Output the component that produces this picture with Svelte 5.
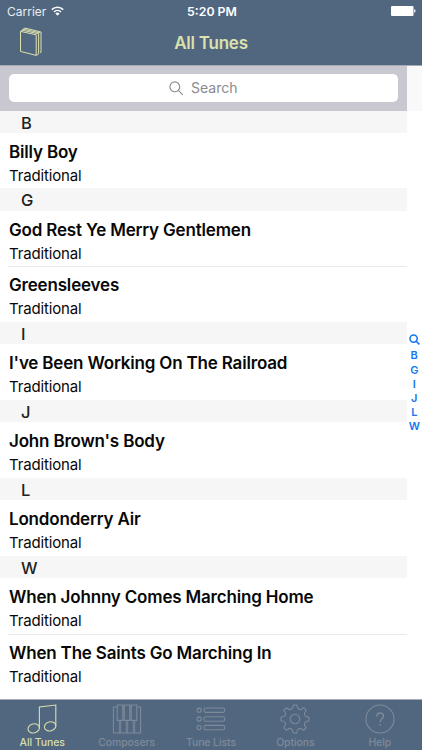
<script lang="ts">
  interface Tune {
    title: string;
    composer: string;
  }

  interface Section {
    letter: string;
    tunes: Tune[];
  }

  const composer = "Traditional";

  const sections: Section[] = [
    { letter: "B", tunes: [{ title: "Billy Boy", composer }] },
    {
      letter: "G",
      tunes: [
        { title: "God Rest Ye Merry Gentlemen", composer },
        { title: "Greensleeves", composer },
      ],
    },
    { letter: "I", tunes: [{ title: "I've Been Working On The Railroad", composer }] },
    { letter: "J", tunes: [{ title: "John Brown's Body", composer }] },
    { letter: "L", tunes: [{ title: "Londonderry Air", composer }] },
    {
      letter: "W",
      tunes: [
        { title: "When Johnny Comes Marching Home", composer },
        { title: "When The Saints Go Marching In", composer },
      ],
    },
  ];

  const tabs = [
    { id: "tunes", label: "All Tunes" },
    { id: "composers", label: "Composers" },
    { id: "lists", label: "Tune Lists" },
    { id: "options", label: "Options" },
    { id: "help", label: "Help" },
  ];

  let activeTab = $state("tunes");
</script>

<div class="app">
  <header>
    <div class="status">
      <div class="carrier">
        <span>Carrier</span>
        <svg width="13" height="10" viewBox="0 0 13 10">
          <path d="M.8 3.6a8.2 8.2 0 0 1 11.4 0M3 5.9a5 5 0 0 1 7 0" fill="none" stroke="#fff" stroke-width="1.6" />
          <path d="M4.4 7.5a3.1 3.1 0 0 1 4.2 0L6.5 9.7z" fill="#fff" />
        </svg>
      </div>
      <span class="time">5:20 PM</span>
      <svg class="battery" width="25" height="10" viewBox="0 0 25 10">
        <rect width="22.5" height="10" rx="1" fill="#fff" />
        <path d="M23.2 3.3q1.4.3 1.4 1.7t-1.4 1.7z" fill="#fff" />
      </svg>
    </div>
    <div class="navbar">
      <button class="book" aria-label="Books">
        <svg width="24" height="30" viewBox="0 0 24 30" fill="none" stroke="currentColor" stroke-width="1" stroke-linejoin="round">
          <path d="M1.5 4.4 17.2 7.8V28.4L1.5 24.4z" />
          <path d="M1.5 4.4 5.9 1 22 5V25.4H21M3 3.2 19.6 6.8V26.9L17.2 28.4M4.4 2.1 21 5.9" />
        </svg>
      </button>
      <h1>All Tunes</h1>
    </div>
  </header>

  <main>
    <div class="list">
      <div class="search">
        <div class="field">
          <svg width="15" height="15" viewBox="0 0 15 15" fill="none" stroke="currentColor" stroke-width="1.1">
            <circle cx="5.8" cy="5.8" r="4.9" />
            <path d="m9.4 9.4 4.4 4.4" />
          </svg>
          <span>Search</span>
        </div>
      </div>
      {#each sections as section (section.letter)}
        <section>
          <h2>{section.letter}</h2>
          {#each section.tunes as tune (tune.title)}
            <div class="tune">
              <span class="title">{tune.title}</span>
              <span class="composer">{tune.composer}</span>
            </div>
          {/each}
        </section>
      {/each}
    </div>
    <nav class="index">
      <svg width="11" height="11" viewBox="0 0 11 11" fill="none" stroke="currentColor" stroke-width="1.6">
        <circle cx="4.6" cy="4.6" r="3.6" />
        <path d="m7.2 7.2 3.2 3.2" />
      </svg>
      {#each sections as section (section.letter)}
        <span>{section.letter}</span>
      {/each}
    </nav>
  </main>

  <nav class="tabbar">
    {#each tabs as tab (tab.id)}
      <button class="tab" class:active={activeTab === tab.id} onclick={() => (activeTab = tab.id)}>
        <svg width="32" height="32" viewBox="0 0 32 32" fill="none" stroke="currentColor" stroke-width="1.1">
          {#if tab.id === "tunes"}
            <path d="M13.4 25V4L29.8 2V23.2" />
            <ellipse cx="7.7" cy="25.4" rx="5.8" ry="4.5" transform="rotate(-15 7.7 25.4)" />
            <ellipse cx="24.1" cy="23.4" rx="5.8" ry="4.5" transform="rotate(-15 24.1 23.4)" />
          {:else if tab.id === "composers"}
            <path d="M6.2 4H2.4V30H9V17.4M9 30H16V17.4M16 30H23V17.4M23 30H29.6V4H25.8" />
            <path d="M6.2 2H11.8V17.4H6.2zM13.2 2H18.8V17.4H13.2zM20.2 2H25.8V17.4H20.2z" />
            <path d="M8.2 17.4V30M9.8 17.4V30M15.2 17.4V30M16.8 17.4V30M22.2 17.4V30M23.8 17.4V30" stroke-width=".6" />
            <path d="M11.8 4H13.2M18.8 4H20.2" />
          {:else if tab.id === "lists"}
            {#each [7.2, 16, 24.6] as y}
              <circle cx="4.1" cy={y} r="2.1" />
              <rect x="9" y={y - 2.2} width="20.7" height="4.4" rx="1.8" />
            {/each}
          {:else if tab.id === "options"}
            <circle cx="16" cy="16" r="4.8" />
            <path
              stroke-linejoin="round"
              d="M14.2 2H17.8Q18.6 5.4 19.2 5.8T21.1 6.6 24.7 4.7L27.3 7.3Q25.3 10.4 25.4 10.9T26.2 12.8 30 14.2V17.8Q26.6 18.6 26.2 19.2T25.4 21.1 27.3 24.7L24.7 27.3Q21.6 25.3 21.1 25.4T19.2 26.2 17.8 30H14.2Q13.4 26.6 12.8 26.2T10.9 25.4 7.3 27.3L4.7 24.7Q6.7 21.6 6.6 21.1T5.8 19.2 2 17.8V14.2Q5.4 13.4 5.8 12.8T6.6 10.9 4.7 7.3L7.3 4.7Q10.4 6.7 10.9 6.6T12.8 5.8 14.2 2z"
            />
          {:else}
            <circle cx="16" cy="16" r="14" />
            <path d="M12.8 13.6C12.8 11.2 14.1 10 16.1 10S19.4 11.2 19.4 13C19.4 15.8 16.2 15.8 16.2 19.2" stroke-width="1.4" />
            <circle cx="16.2" cy="21.8" r=".9" fill="currentColor" stroke="none" />
          {/if}
        </svg>
        <span>{tab.label}</span>
      </button>
    {/each}
  </nav>
</div>

<style>
  :global(body) {
    margin: 0;
  }

  .app {
    width: 422px;
    height: 750px;
    display: flex;
    flex-direction: column;
    overflow: hidden;
    background: #fff;
    color: #080808;
    font-family: Inter, "Liberation Sans", sans-serif;
  }

  button {
    padding: 0;
    border: 0;
    background: none;
    font: inherit;
  }

  h1,
  h2 {
    margin: 0;
    font-weight: 600;
  }

  svg {
    display: block;
    flex: none;
  }

  header {
    height: 65.5px;
    flex: none;
    background: #51677f;
    border-bottom: 1px solid #a5aab6;
    box-sizing: border-box;
  }

  .status {
    height: 22px;
    display: grid;
    grid-template-columns: 1fr auto 1fr;
    align-items: center;
    padding: 0 6px 0 7px;
    color: #fff;
  }

  .carrier {
    display: flex;
    align-items: center;
    gap: 5px;
    color: #e9edf1;
    font-size: 12px;
  }

  .time {
    padding-left: 1px;
    font-size: 12.3px;
    font-weight: 600;
  }

  .battery {
    justify-self: end;
  }

  .navbar {
    height: 42px;
    display: grid;
    grid-template-columns: 1fr auto 1fr;
    align-items: center;
    color: #dce1ad;
  }

  .book {
    width: 24px;
    margin-left: 19px;
    margin-top: -2px;
    color: inherit;
  }

  .navbar h1 {
    font-size: 17px;
    letter-spacing: -0.25px;
  }

  main {
    flex: 1;
    min-height: 0;
    display: flex;
  }

  .list {
    width: 406.5px;
  }

  .search {
    height: 45px;
    padding: 8px 8.5px 8.5px;
    box-sizing: border-box;
    background: #c9c8d0;
  }

  .field {
    height: 28.5px;
    display: flex;
    align-items: center;
    justify-content: center;
    gap: 7px;
    border-radius: 5px;
    background: #fff;
    color: #8a8a8f;
    font-size: 14px;
  }

  .field svg {
    margin-top: 1px;
  }

  h2 {
    height: 22.3px;
    padding-left: 21px;
    background: #f6f6f6;
    color: #222;
    font-size: 16.5px;
    font-weight: 500;
    line-height: 24px;
  }

  .tune {
    height: 55.7px;
    padding-left: 9px;
    box-sizing: border-box;
    display: flex;
    flex-direction: column;
    white-space: nowrap;
  }

  .tune + .tune {
    background: linear-gradient(#e9e9eb, #e9e9eb) 8px 0 / 100% 1px no-repeat;
  }

  .title {
    padding-top: 8px;
    font-size: 17px;
    font-weight: 600;
    line-height: 23px;
    letter-spacing: -0.18px;
  }

  .composer {
    font-size: 15px;
    line-height: 23px;
    letter-spacing: -0.16px;
  }

  .index {
    flex: 1;
    display: flex;
    flex-direction: column;
    align-items: center;
    justify-content: center;
    padding-top: 3px;
    background: linear-gradient(#f9f9f9, #f9f9f9) 0 0 / 100% 45px no-repeat;
    color: #1478ef;
    font-size: 11px;
    font-weight: 600;
    line-height: 14.1px;
  }

  .index svg {
    margin-bottom: 3px;
  }

  .tabbar {
    height: 51px;
    flex: none;
    display: flex;
    justify-content: space-between;
    box-sizing: border-box;
    border-top: 1px solid #a5aab3;
    background: #51677f;
  }

  .tab {
    width: 84.4px;
    display: flex;
    flex-direction: column;
    align-items: center;
    padding-top: 3px;
    color: #7e8a99;
    font-size: 10.5px;
    font-weight: 500;
    line-height: 16px;
    letter-spacing: -0.1px;
  }

  .tab.active {
    color: #d7deae;
  }
</style>
